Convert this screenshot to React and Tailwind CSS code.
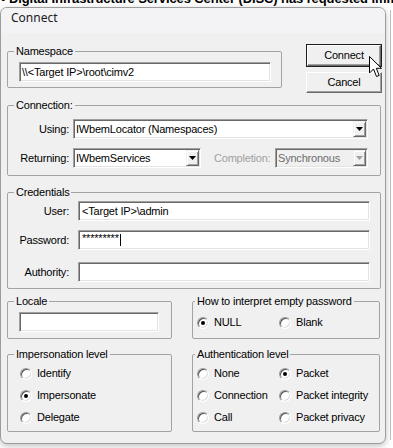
import React from "react";

const sunken =
  "border border-t-[#a0a0a0] border-l-[#a0a0a0] border-b-white border-r-white shadow-[inset_1px_1px_0_#696969,inset_-1px_-1px_0_#e3e3e3]";

function Group({ legend, className = "", inner = "", legendClass = "ml-[6px]", children }) {
  return (
    <fieldset className={`border border-[#a3a3a3] rounded-[2px] ${className}`}>
      <legend className={`${legendClass} px-[2px] leading-[13px]`}>{legend}</legend>
      <div className={inner}>{children}</div>
    </fieldset>
  );
}

function Input({ children, className = "" }) {
  return (
    <div className={`h-[20px] bg-white flex items-center pl-[2px] whitespace-nowrap overflow-hidden ${sunken} ${className}`}>
      {children}
    </div>
  );
}

function Arrow({ disabled }) {
  return (
    <svg width="7" height="4" viewBox="0 0 7 4">
      <path d="M0 0H7L3.5 4Z" fill={disabled ? "#a0a0a0" : "#000"} />
    </svg>
  );
}

function Combo({ text, className = "", disabled }) {
  return (
    <div
      className={`h-[20px] flex items-center whitespace-nowrap overflow-hidden ${sunken} ${
        disabled ? "bg-[#f0f0f0] text-[#6d6d6d]" : "bg-white"
      } ${className}`}
    >
      <span className="flex-1 pl-[2px]">{text}</span>
      <span className="w-[13px] h-[16px] mr-px bg-[#f0f0f0] border border-t-[#f0f0f0] border-l-[#f0f0f0] border-b-[#696969] border-r-[#696969] shadow-[inset_1px_1px_0_#fff,inset_-1px_-1px_0_#a0a0a0] flex items-center justify-center">
        <Arrow disabled={disabled} />
      </span>
    </div>
  );
}

function Radio({ checked, label, className = "" }) {
  return (
    <div className={`flex items-center h-[13px] whitespace-nowrap ${className}`}>
      <span className="w-[12px] h-[12px] shrink-0 rounded-full bg-white border border-t-[#9a9a9a] border-l-[#9a9a9a] border-b-white border-r-white shadow-[inset_1px_1px_0_#555,inset_-1px_-1px_0_#dcdcdc] flex items-center justify-center">
        {checked && <span className="w-[4px] h-[4px] rounded-full bg-black" />}
      </span>
      <span className="ml-[5px]">{label}</span>
    </div>
  );
}

const btnBase =
  "h-full w-full bg-[#f0f0f0] border border-t-white border-l-white border-b-[#696969] border-r-[#696969] shadow-[inset_-1px_-1px_0_#a0a0a0] flex items-center justify-center";

export default function App() {
  return (
    <div className="w-[393px] h-[448px] bg-white overflow-hidden relative font-['Liberation_Sans',Arial,sans-serif] text-[11px] tracking-[-0.2px] text-black">
      <div className="h-[7px] overflow-hidden whitespace-nowrap">
        <div className="-mt-[8px] pl-[1px] font-bold text-[13px] leading-[13px] tracking-[-0.1px]">
          • Digital Infrastructure Services Center (DISC) has requested imme
        </div>
      </div>
      <div className="flex">
        <div className="w-[386px] h-[437px] rounded-[7px] border border-[#9c9c9c] bg-[#f0f0f0] overflow-hidden shadow-[0_2px_6px_rgba(0,0,0,0.25)] flex flex-col">
          <div className="h-[25px] bg-[#f3f3f6] pl-[10px] pt-[2px] font-['Noto_Sans',sans-serif] text-[12px] leading-[16px] tracking-[0px] text-[#1a1a1a]">
            Connect
          </div>
          <div className="flex-1 pl-[6px] pt-[11px]">
            {/* Row 1 */}
            <div className="flex items-start">
              <Group legend="Namespace" className="mt-[1px] w-[275px]" inner="pl-[11px] pr-[10px] pt-[4px] pb-[5px]">
                <Input>{"\\\\<Target IP>\\root\\cimv2"}</Input>
              </Group>
              <div className="ml-[24px] w-[76px] flex flex-col">
                <div className="h-[23px] border border-[#1e1e1e]">
                  <div className={btnBase}>Connect</div>
                </div>
                <div className="h-[21px] mt-[5px]">
                  <div className={btnBase}>Cancel</div>
                </div>
              </div>
            </div>

            {/* Connection */}
            <Group legend="Connection:" className="mt-[6px] w-[374px]" inner="pr-[12px] pt-[7px] pb-[7px]">
              <div className="flex items-center">
                <span className="w-[61px] text-right">Using:</span>
                <Combo text="IWbemLocator (Namespaces)" className="ml-[4px] flex-1" />
              </div>
              <div className="flex items-center mt-[9px]">
                <span className="w-[61px] text-right">Returning:</span>
                <Combo text="IWbemServices" className="ml-[4px] w-[128px]" />
                <span className="ml-[13px] text-[#a0a0a0]">Completion:</span>
                <Combo text="Synchronous" disabled className="ml-auto w-[93px]" />
              </div>
            </Group>

            {/* Credentials */}
            <Group legend="Credentials" className="mt-[10px] w-[374px]" inner="pr-[10px] pt-[2px] pb-[6px]">
              <div className="flex items-center">
                <span className="w-[61px] text-right">User:</span>
                <Input className="ml-[9px] flex-1 pl-[3px]">{"<Target IP>\\admin"}</Input>
              </div>
              <div className="flex items-center mt-[9px]">
                <span className="w-[61px] text-right">Password:</span>
                <Input className="ml-[9px] flex-1 pl-[3px]">
                  <span className="self-start mt-[1px] leading-[13px]">*********</span>
                  <span className="w-px h-[12px] bg-black ml-[1px]" />
                </Input>
              </div>
              <div className="flex items-center mt-[12px]">
                <span className="w-[61px] text-right">Authority:</span>
                <Input className="ml-[9px] flex-1" />
              </div>
            </Group>

            {/* Locale / empty password */}
            <div className="flex mt-[6px]">
              <Group legend="Locale" className="w-[165px]" inner="pl-[11px] pt-[4px] pb-[6px]">
                <Input className="w-[140px]" />
              </Group>
              <Group legend="How to interpret empty password" legendClass="ml-[2px]" className="ml-[20px] w-[188px]" inner="pl-[4px] pt-[8px] pb-[9px]">
                <div className="grid grid-cols-[82px_1fr]">
                  <Radio checked label="NULL" />
                  <Radio label="Blank" />
                </div>
              </Group>
            </div>

            {/* Impersonation / Authentication */}
            <div className="flex mt-[9px]">
              <Group legend="Impersonation level" className="w-[165px]" inner="pl-[12px] pt-[6px] pb-[7px]">
                <div className="flex flex-col gap-[9px]">
                  <Radio label="Identify" />
                  <Radio checked label="Impersonate" />
                  <Radio label="Delegate" />
                </div>
              </Group>
              <Group legend="Authentication level" legendClass="ml-[2px]" className="ml-[20px] w-[188px]" inner="pl-[4px] pt-[6px] pb-[7px]">
                <div className="grid grid-cols-[82px_1fr] gap-y-[9px]">
                  <Radio label="None" />
                  <Radio checked label="Packet" />
                  <Radio label="Connection" />
                  <Radio label="Packet integrity" />
                  <Radio label="Call" />
                  <Radio label="Packet privacy" />
                </div>
              </Group>
            </div>
          </div>
        </div>
        <div className="ml-[4px] mt-[3px] w-px h-[430px] bg-[#bdbdbd]" />
      </div>

      {/* mouse cursor */}
      <svg className="absolute left-[369px] top-[56px]" width="14" height="22" viewBox="0 0 14 22">
        <path d="M0.5 0.5L0.5 17L4.5 13L7.5 20.5L10.2 19.4L7.3 12.3L12.5 12.3Z" fill="#fff" stroke="#000" strokeWidth="1" strokeLinejoin="round" />
      </svg>
    </div>
  );
}
